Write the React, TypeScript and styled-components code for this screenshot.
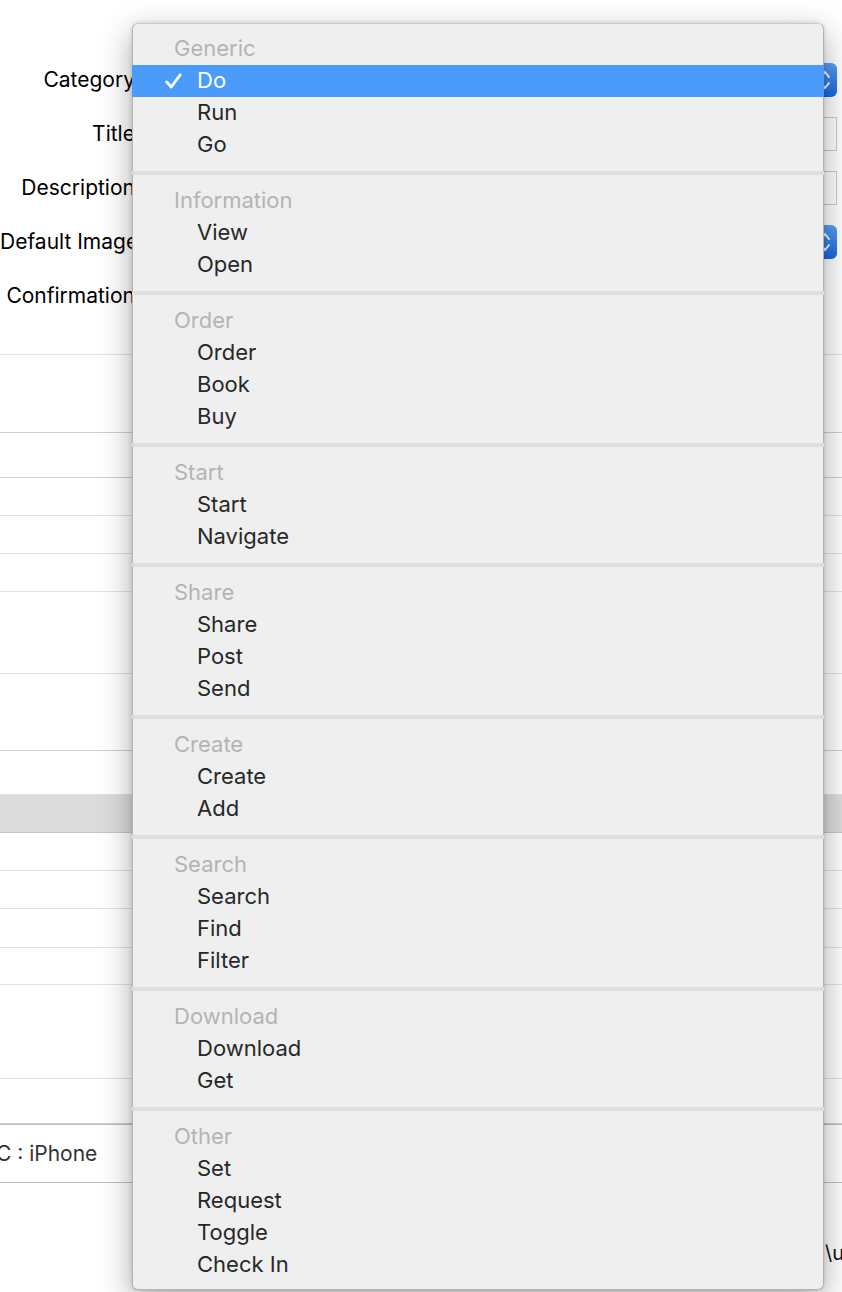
import * as React from "react";
import styled, {createGlobalStyle} from "styled-components";

const GlobalStyle = createGlobalStyle`
  html, body {
    margin: 0;
    padding: 0;
    background: #ffffff;
    overflow: hidden;
  }
  body {
    font-family: Inter, "Liberation Sans", sans-serif;
  }
`;

interface MenuSection {
  title: string,
  items: string[]
}

const sections: MenuSection[] = [
  {title: "Generic", items: ["Do", "Run", "Go"]},
  {title: "Information", items: ["View", "Open"]},
  {title: "Order", items: ["Order", "Book", "Buy"]},
  {title: "Start", items: ["Start", "Navigate"]},
  {title: "Share", items: ["Share", "Post", "Send"]},
  {title: "Create", items: ["Create", "Add"]},
  {title: "Search", items: ["Search", "Find", "Filter"]},
  {title: "Download", items: ["Download", "Get"]},
  {title: "Other", items: ["Set", "Request", "Toggle", "Check In"]},
];

// rows of the list behind the menu: height includes the bottom border
const listRows: {height: number, strong?: boolean}[] = [
  {height: 35},
  {height: 78, strong: true},
  {height: 45, strong: true},
  {height: 38},
  {height: 38},
  {height: 38},
  {height: 82},
  {height: 77, strong: true},
  {height: 44},
];

const lowerRows: {height: number, strong?: boolean}[] = [
  {height: 38},
  {height: 38},
  {height: 39},
  {height: 37},
  {height: 94},
  {height: 45, strong: true},
];

const Page = styled.div`
  position: relative;
  width: 842px;
  height: 1292px;
  overflow: hidden;
`;

const Form = styled.div`
  display: grid;
  grid-template-columns: 141px 1fr;
  grid-auto-rows: 34px;
  row-gap: 20px;
  column-gap: 10px;
  padding: 63px 5px 0 0;
  height: 320px;
  box-sizing: border-box;
`;

const Label = styled.div`
  font-family: Inter, "Liberation Sans", sans-serif;
  font-size: 21px;
  color: #000;
  text-align: right;
  white-space: nowrap;
  line-height: 34px;
`;

const Field = styled.div`
  border: 1px solid #c9c9c9;
  background: #fff;
  box-sizing: border-box;
`;

const Popup = styled.div`
  display: flex;
  justify-content: flex-end;
  border: 1px solid #cfcfcf;
  border-radius: 6px;
  background: #fff;
  box-sizing: border-box;
`;

const PopupCap = styled.div`
  width: 24px;
  margin: -1px;
  border-radius: 0 6px 6px 0;
  background: linear-gradient(#5aa0f7, #1765e3);
  display: flex;
  align-items: center;
  justify-content: center;
`;

const List = styled.div`
  display: flex;
  flex-direction: column;
`;

const Row = styled.div<{$h: number, $strong?: boolean}>`
  height: ${p => p.$h}px;
  box-sizing: border-box;
  border-bottom: 1px solid ${p => p.$strong ? "#cfcfcf" : "#e2e2e2"};
`;

const Band = styled.div`
  height: 38px;
  box-sizing: border-box;
  background: #dcdcdc;
  border-bottom: 1px solid #c6c6c6;
`;

const DeviceRow = styled.div`
  height: 59px;
  box-sizing: border-box;
  border-top: 1px solid #bfbfbf;
  border-bottom: 1px solid #bfbfbf;
  display: flex;
  align-items: center;
  font-size: 21px;
  color: #333;
  text-indent: -4px;
  white-space: nowrap;
`;

const TailRow = styled.div`
  height: 140px;
  display: flex;
  align-items: center;
  padding-left: 825px;
  font-size: 20px;
  color: #111;
  white-space: nowrap;
`;

const Menu = styled.div`
  position: absolute;
  left: 132px;
  top: 23px;
  width: 692px;
  box-sizing: border-box;
  padding: 9px 0 8px;
  background: #efefef;
  border: 1px solid #b3b3b3;
  border-top-color: #cbcbcb;
  border-radius: 6px;
  box-shadow: 0 10px 32px rgba(0, 0, 0, 0.34), 0 0 4px rgba(0, 0, 0, 0.14);
  font-family: Inter, "Liberation Sans", sans-serif;
  font-size: 22px;
`;

const Separator = styled.div`
  height: 4px;
  margin: 10px -1px;
  background: #dedede;
`;

const Header = styled.div`
  height: 32px;
  line-height: 31px;
  padding-left: 41px;
  color: #b4b4b4;
`;

const Item = styled.div<{$selected?: boolean}>`
  position: relative;
  height: 32px;
  line-height: 31px;
  padding-left: 65px;
  margin: 0 -1px;
  color: ${p => p.$selected ? "#ffffff" : "#282828"};
  background: ${p => p.$selected ? "#4b9cfa" : "transparent"};
`;

const Check = styled.svg`
  position: absolute;
  left: 33px;
  top: 8px;
`;

const Chevrons = () => (
  <svg width="12" height="22" viewBox="0 0 12 22">
    <path d="M2 8 L6 3 L10 8 M2 14 L6 19 L10 14" fill="none" stroke="#fff" strokeWidth="2" strokeLinecap="round"/>
  </svg>
);

export default function App() {
  return (
    <Page>
      <GlobalStyle/>
      <Form>
        <Label>Category:</Label>
        <Popup><PopupCap><Chevrons/></PopupCap></Popup>
        <Label>Title:</Label>
        <Field/>
        <Label>Description:</Label>
        <Field/>
        <Label>Default Image:</Label>
        <Popup><PopupCap><Chevrons/></PopupCap></Popup>
        <Label>Confirmation:</Label>
        <div/>
      </Form>
      <List>
        {listRows.map((r, i) => <Row key={"a" + i} $h={r.height} $strong={r.strong}/>)}
        <Band/>
        {lowerRows.map((r, i) => <Row key={"b" + i} $h={r.height} $strong={r.strong}/>)}
        <DeviceRow>C : iPhone</DeviceRow>
        <TailRow>\u0041</TailRow>
      </List>

      <Menu>
        {sections.map((s, si) => (
          <React.Fragment key={s.title}>
            {si > 0 && <Separator/>}
            <Header>{s.title}</Header>
            {s.items.map((item, ii) => {
              const selected = si === 0 && ii === 0;
              return (
                <Item key={item + ii} $selected={selected}>
                  {selected && (
                    <Check width="17" height="16" viewBox="0 0 17 16">
                      <path d="M1.8 9 L6.2 14 L15.2 1.8" fill="none" stroke="#fff" strokeWidth="2.8"
                            strokeLinecap="round" strokeLinejoin="round"/>
                    </Check>
                  )}
                  {item}
                </Item>
              );
            })}
          </React.Fragment>
        ))}
      </Menu>
    </Page>
  );
}
